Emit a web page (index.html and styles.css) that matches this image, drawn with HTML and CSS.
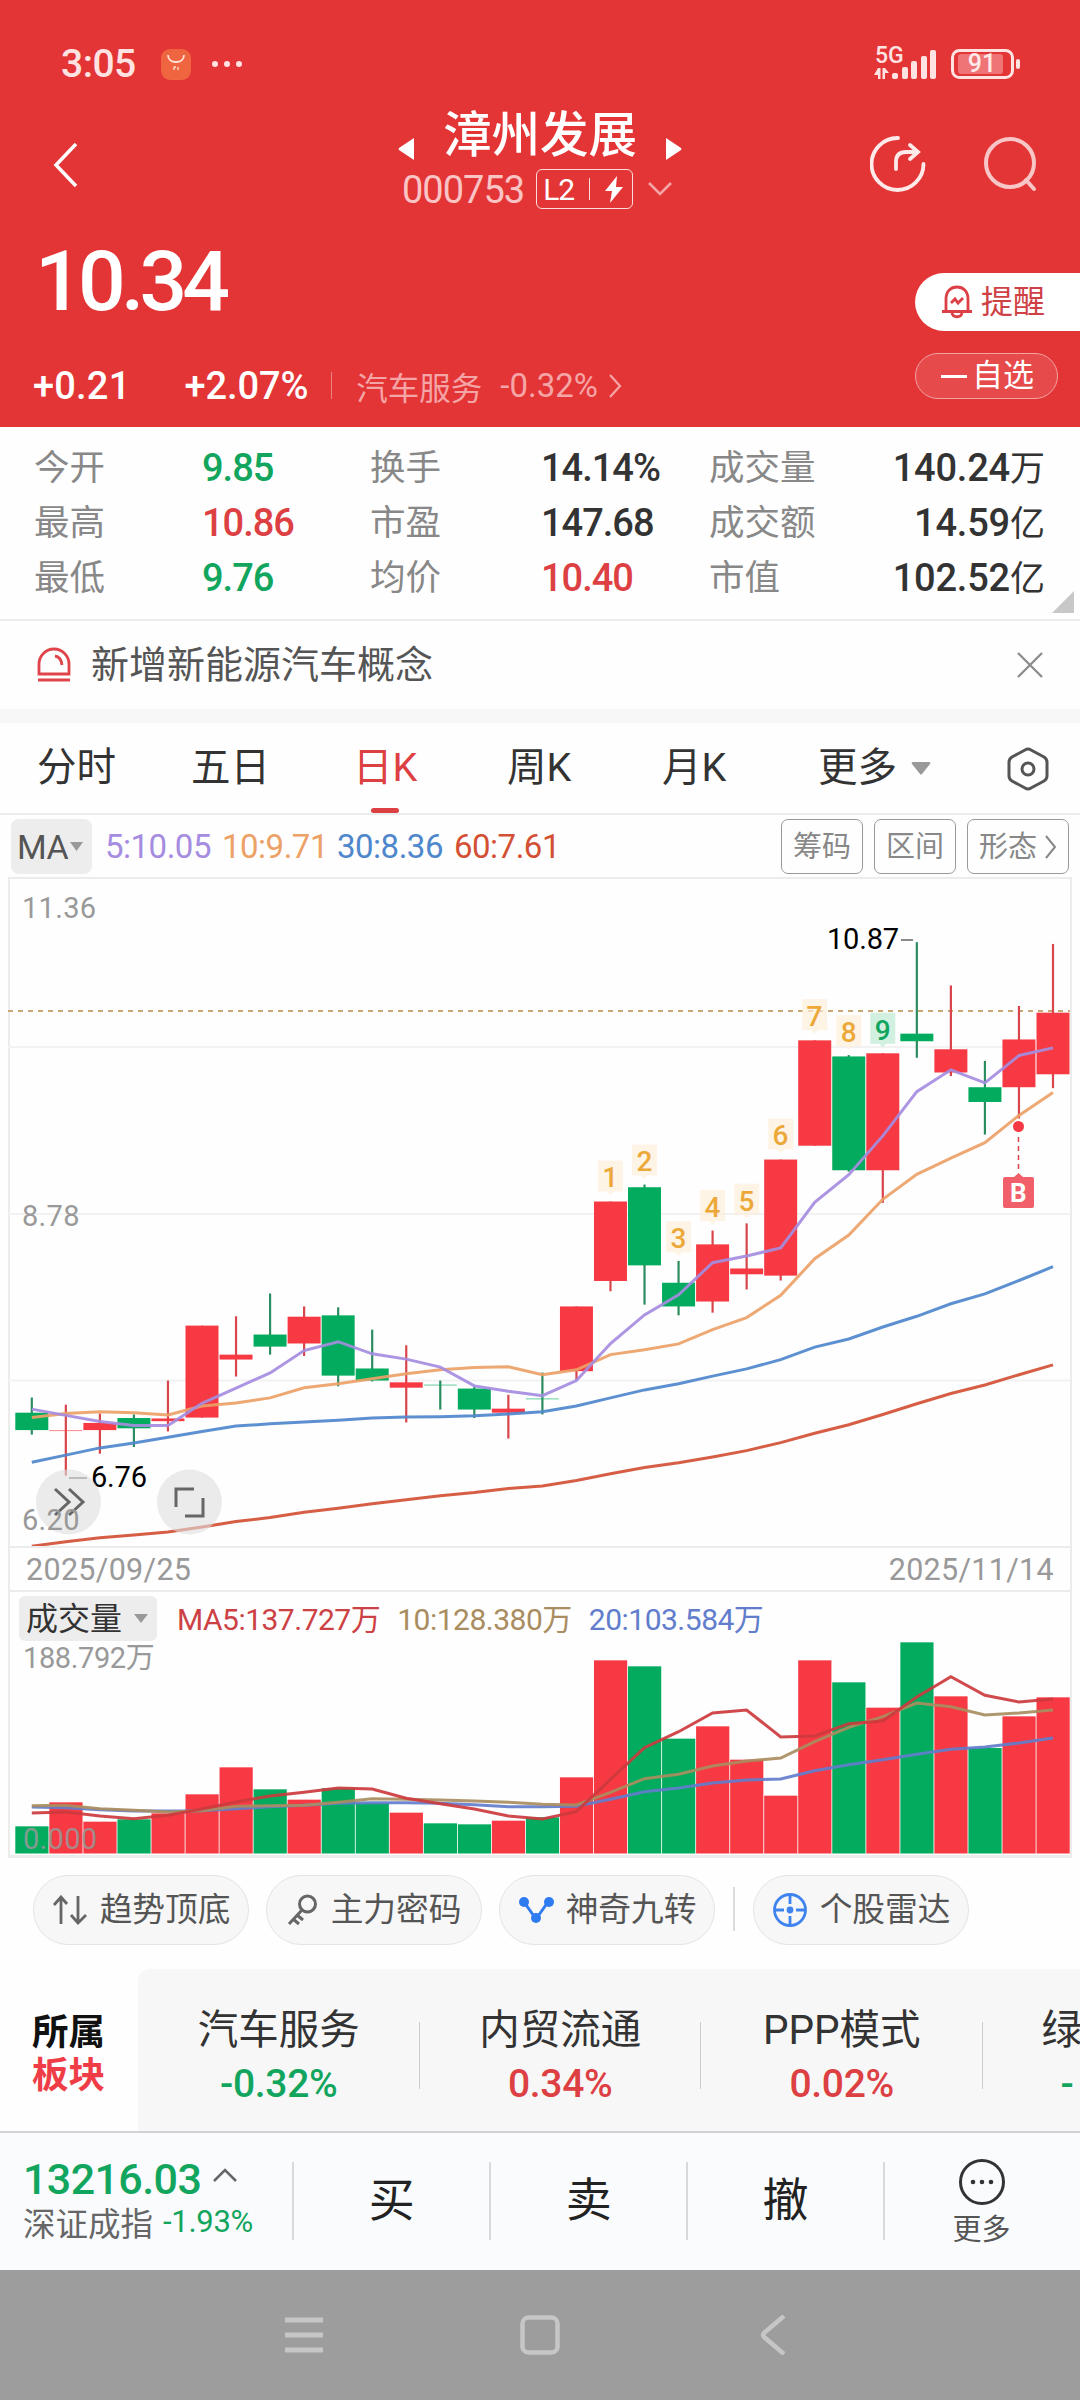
FILE: index.html
```html
<!DOCTYPE html>
<html lang="zh-CN">
<head>
  <meta charset="UTF-8" />
  <meta name="viewport" content="width=device-width, initial-scale=1.0" />
  <title>漳州发展 000753</title>
  <link rel="stylesheet" href="styles.css">
</head>
<body>
  <header>
    <div class="status">
      <span class="clock">3:05</span>
      <svg class="app-icon" width="30" height="31" viewBox="0 0 30 31"><rect width="30" height="31" rx="9" fill="#ee6540"/><path d="M7 6c0 4 3 7 8 7s8-3 8-7" fill="none" stroke="#fde3d8" stroke-width="1.8"/><path d="M13 18v3M17 18v3M13 18h2" stroke="#fde3d8" stroke-width="1.3" fill="none"/></svg>
      <svg width="32" height="8" viewBox="0 0 32 8" fill="#ffe3e3"><circle cx="4" cy="4" r="3"/><circle cx="16" cy="4" r="3"/><circle cx="28" cy="4" r="3"/></svg>
      <span class="grow"></span>
      <svg width="64" height="44" viewBox="0 -4 64 44" fill="#ffe3e3">
        <text x="1" y="17" class="net">5G</text>
        <path d="M4 22h2.5v11H4zl-4 7h4zM8.500 22h2.500v11h-2.500zM11 22l4 5h-4z"/>
        <rect x="18" y="27" width="6" height="6" rx="2"/><rect x="28" y="21" width="6" height="12" rx="2"/><rect x="37" y="15" width="6" height="18" rx="2"/><rect x="47" y="10" width="6" height="23" rx="2"/><rect x="56" y="4" width="6" height="29" rx="2"/>
      </svg>
      <svg class="battery" width="70" height="30" viewBox="0 0 70 30">
        <rect x="1.500" y="1.500" width="60" height="27" rx="7" fill="none" stroke="#ffe3e3" stroke-width="3"/>
        <rect x="7" y="5" width="45" height="20" rx="3" fill="#ee7476"/>
        <rect x="65" y="10" width="4" height="10" rx="2" fill="#ffe3e3"/>
        <text x="31" y="23" text-anchor="middle" class="bat">91</text>
      </svg>
    </div>

    <div class="titlebar">
      <svg class="back" width="26" height="46" viewBox="0 0 26 46"><path d="M23 2L3 23l20 21" fill="none" stroke="#fff" stroke-width="3.500"/></svg>
      <div class="stock">
        <div class="name">
          <svg width="17" height="24" viewBox="0 0 17 24"><path d="M16 1v22L1 13q-1-1 0-2z" fill="#fff"/></svg>
          <h1>漳州发展</h1>
          <svg width="17" height="24" viewBox="0 0 17 24"><path d="M1 1v22l15-10q1-1 0-2z" fill="#fff"/></svg>
        </div>
        <div class="code">
          <span>000753</span>
          <div class="level">L2<i></i><svg width="18" height="27" viewBox="0 0 18 27"><path d="M12 0L0 15h7L5 27l13-16h-7z" fill="#fff"/></svg></div>
          <svg width="24" height="14" viewBox="0 0 24 14"><path d="M1 1l11 11L23 1" fill="none" stroke="#f5a5a6" stroke-width="2.500"/></svg>
        </div>
      </div>
      <div class="tools">
        <svg width="56" height="58" viewBox="0 0 56 58" fill="none" stroke="#ffe9e9" stroke-width="3.800" stroke-linecap="round"><path d="M28 3A26 26 0 1 0 53.500 29"/><path d="M26 34v-7q0-10 10-10h11M40 10l8 7-8 7"/></svg>
        <svg width="54" height="58" viewBox="0 0 54 58" fill="none" stroke="#f8c6c7" stroke-width="4" stroke-linecap="round"><circle cx="27" cy="28" r="24"/><path d="M43 45l8 9"/></svg>
      </div>
    </div>

    <div class="quote">
      <div>
        <div class="price">10.34</div>
        <div class="change">
          <b>+0.21</b><b class="pct">+2.07%</b><i></i>
          <span class="sector">汽车服务</span><span class="sector-pct">-0.32%</span>
          <svg width="13" height="24" viewBox="0 0 13 24"><path d="M1 1l10 11L1 23" fill="none" stroke="#f5a5a6" stroke-width="2.200"/></svg>
        </div>
      </div>
      <div class="actions">
        <div class="remind">
          <svg width="32" height="34" viewBox="0 0 32 34" fill="none" stroke="#dc3f45" stroke-width="2.800"><path d="M5 26V14C5 6 10 2 16 2s11 4 11 12v12M1 26.500h30M11 28c1 5 9 5 10 0"/><path d="M10 18l4-4 3 4 5-5"/></svg>
          提醒
        </div>
        <div class="watch"><i></i>自选</div>
      </div>
    </div>
  </header>

  <section class="stats">
    <span>今开</span><b class="green">9.85</b><span>换手</span><b>14.14%</b><span>成交量</span><b class="right">140.24<em>万</em></b>
    <span>最高</span><b class="red">10.86</b><span>市盈</span><b>147.68</b><span>成交额</span><b class="right">14.59<em>亿</em></b>
    <span>最低</span><b class="green">9.76</b><span>均价</span><b class="red">10.40</b><span>市值</span><b class="right">102.52<em>亿</em></b>
    <i class="corner"></i>
  </section>

  <section class="notice">
    <svg width="34" height="36" viewBox="0 0 34 36" fill="none" stroke="#e0444b" stroke-width="2.800"><path d="M2 27V17a15 15 0 0 1 30 0v10zM1 33h32M18 9q6 1 7 9"/></svg>
    <span>新增新能源汽车概念</span>
    <svg width="26" height="26" viewBox="0 0 26 26"><path d="M1 1l24 24M25 1L1 25" stroke="#8c8c8c" stroke-width="2.300"/></svg>
  </section>

  <nav class="tabs">
    <span>分时</span><span>五日</span><span class="active">日K</span><span>周K</span><span>月K</span><span>更多<svg width="20" height="13" viewBox="0 0 20 13"><path d="M2 0h16q2 0 1 2l-8 10q-1 1-2 0L1 2q-1-2 1-2z" fill="#999"/></svg></span>
    <svg class="gear" width="42" height="44" viewBox="0 0 42 44" fill="none" stroke="#555" stroke-width="3"><path d="M18 3q3-2 6 0l13 7q3 2 3 5v14q0 3-3 5l-13 7q-3 2-6 0L5 34q-3-2-3-5V15q0-3 3-5z"/><circle cx="21" cy="22" r="6"/></svg>
  </nav>

  <section class="ma-bar">
    <div class="ma">MA<svg width="13" height="9" viewBox="0 0 13 9"><path d="M0 0h13L6.500 9z" fill="#999"/></svg></div>
    <span class="ma5">5:10.05</span><span class="ma10">10:9.71</span><span class="ma30">30:8.36</span><span class="ma60">60:7.61</span>
    <div class="btns"><div>筹码</div><div>区间</div><div>形态<svg width="13" height="24" viewBox="0 0 13 24"><path d="M2 1l9 11-9 11" fill="none" stroke="#888" stroke-width="2"/></svg></div></div>
  </section>

  <section class="charts">
    <svg id="kline" width="1062" height="667" viewBox="8 879 1062 667"></svg>
    <div class="dates"><span>2025/09/25</span><span>2025/11/14</span></div>
    <div class="vol-bar">
      <div class="vol">成交量<svg width="14" height="9" viewBox="0 0 14 9"><path d="M0 0h14L7 9z" fill="#999"/></svg></div>
      <span class="v5">MA5:137.727万</span><span class="v10">10:128.380万</span><span class="v20">20:103.584万</span>
    </div>
    <svg id="volume" width="1062" height="214" viewBox="8 1641 1062 214"></svg>
  </section>

  <section class="pills">
    <div><svg width="36" height="30" viewBox="0 0 36 30" fill="none" stroke="#666" stroke-width="2.800"><path d="M9 29V3M2 10l7-8 6 7M26 1v26M19 20l7 8 8-8"/></svg>趋势顶底</div>
    <div><svg width="32" height="32" viewBox="0 0 32 32" fill="none" stroke="#666" stroke-width="3"><circle cx="20.500" cy="10" r="8"/><path d="M15 16L2 30M6 25l6 5M10 21l6 5"/></svg>主力密码</div>
    <div><svg width="36" height="28" viewBox="0 0 36 28" fill="#2f7bf0"><path d="M6 6l12 17L30 6" fill="none" stroke="#2f7bf0" stroke-width="3"/><circle cx="6" cy="6" r="5"/><circle cx="18" cy="22" r="5"/><circle cx="31" cy="6" r="5"/></svg>神奇九转</div>
    <i></i>
    <div><svg width="36" height="36" viewBox="0 0 36 36" fill="none" stroke="#3e83ee" stroke-width="2.800"><circle cx="18" cy="18" r="15.500"/><path d="M18 2v10M18 24v10M2 18h10M24 18h10"/><circle cx="18" cy="18" r="2" fill="#3e83ee"/></svg>个股雷达</div>
  </section>

  <section class="blocks">
    <div class="belong">所属<b>板块</b></div>
    <div class="block-list">
      <div class="block">汽车服务<b class="green">-0.32%</b></div>
      <div class="block">内贸流通<b class="red">0.34%</b></div>
      <div class="block">PPP模式<b class="red">0.02%</b></div>
      <div class="block cut">绿<b class="green">-</b></div>
    </div>
  </section>

  <footer>
    <div class="index">
      <div class="index-val">13216.03<svg width="24" height="14" viewBox="0 0 24 14"><path d="M1 13L12 2l11 11" fill="none" stroke="#666" stroke-width="2.500"/></svg></div>
      <div class="index-name">深证成指<span>-1.93%</span></div>
    </div>
    <div class="trade">买</div>
    <div class="trade">卖</div>
    <div class="trade">撤</div>
    <div class="more">
      <svg width="48" height="48" viewBox="0 0 48 48" fill="#333"><circle cx="24" cy="24" r="21.500" fill="none" stroke="#333" stroke-width="3"/><circle cx="15" cy="24" r="2.300"/><circle cx="24" cy="24" r="2.300"/><circle cx="33" cy="24" r="2.300"/></svg>
      更多
    </div>
  </footer>

  <div class="sysnav">
    <svg width="38" height="40" viewBox="0 0 38 40" stroke="#c6c6c6" stroke-width="5"><path d="M0 5h38M0 20h38M0 35h38"/></svg>
    <svg width="40" height="40" viewBox="0 0 40 40" fill="none" stroke="#c6c6c6" stroke-width="4.500"><rect x="2.500" y="2.500" width="35" height="35" rx="6"/></svg>
    <svg width="26" height="40" viewBox="0 0 26 40" fill="none" stroke="#c6c6c6" stroke-width="4.500"><path d="M24 1L4 18q-2 2 0 4l20 17"/></svg>
  </div>

  <script src="chart.js"></script>
</body>
</html>
```
FILE: styles.css
```css
* { box-sizing: border-box; }
body { margin: 0; width: 1080px; font-family: Roboto, "Noto Sans CJK SC", sans-serif; background: #fefefe; color: #333; overflow-x: hidden; }
svg { display: block; flex: none; }
b { font-weight: 500; }
i, em { font-style: normal; }
.green { color: #12a55e; }
.red { color: #dd4043; }
.grow { flex: 1; }

/* header */
header { background: #e33536; height: 427px; color: #fff; }
.status { display: flex; align-items: center; height: 100px; padding: 28px 59px 0 61px; color: #ffe3e3; }
.clock { font-size: 39px; width: 100px; font-weight: 500; letter-spacing: -.5px; }
.app-icon { margin-right: 20px; }
.battery { margin-left: 13px; }
.net { font-size: 23px; font-weight: 500; }
.bat { font-size: 25px; font-weight: 500; fill: #ffe9e9; }
.titlebar { display: grid; grid-template-columns: 300px 480px 300px; height: 116px; }
.back { margin: 42px 0 0 53px; }
.name { display: flex; justify-content: center; align-items: center; height: 66px; gap: 28px; }
.name svg { margin-top: 32px; }
h1 { margin: 5px 0 0; font-size: 48.5px; line-height: 66px; font-weight: 500; }
.code { display: flex; align-items: center; height: 46px; padding-left: 102px; font-size: 38px; color: #fac3c4; letter-spacing: -1px; }
.code > span { padding-top: 2px; }
.level { display: flex; align-items: center; justify-content: space-between; width: 97px; height: 40px; margin: 0 15px 0 12px; padding: 0 9px 0 6px; border: 1.500px solid #fbdcdc; border-radius: 6px; color: #fff; font-size: 30px; }
.level i { width: 1px; height: 22px; background: #fbdcdc; }
.tools { display: flex; gap: 57px; padding: 35px 0 0 90px; }
.quote { display: flex; justify-content: space-between; }
.price { height: 130px; padding-left: 35px; font-size: 84px; line-height: 132px; font-weight: 500; letter-spacing: -4.800px; }
.change { display: flex; align-items: center; height: 78px; padding-left: 33px; padding-top: 1px; font-size: 38px; letter-spacing: .2px; }
.change .pct { margin-left: 54px; letter-spacing: -.1px; }
.change i { width: 1px; height: 27px; margin: 0 24px 0 23px; background: #ef8485; }
.sector { font-size: 31.5px; letter-spacing: 0; color: #f5a5a6; }
.sector-pct { margin: 0 11px 0 18px; font-size: 33px; color: #f5a5a6; letter-spacing: 0; }
.actions { display: flex; flex-direction: column; gap: 22px; width: 165px; padding-top: 57px; }
.remind { display: flex; align-items: center; gap: 8px; height: 58px; padding-left: 26px; border-radius: 29px 0 0 29px; background: #fff; color: #cf4145; font-size: 32px; line-height: 58px; }
.watch { display: flex; align-items: center; gap: 5px; width: 143px; height: 46px; padding-left: 25px; border: 1.500px solid #f3a3a4; border-radius: 23px; background: #e64a4b; font-size: 31px; line-height: 40px; }
.watch i { width: 26px; height: 3px; background: #fff; }

/* quote table */
.stats { position: relative; display: grid; grid-template-columns: 168px 168px 171px 168px 150px 186px; grid-auto-rows: 55px; height: 194px; padding: 14px 34px 0; border-bottom: 2px solid #ececec; line-height: 55px; }
.stats span { font-size: 35.5px; color: #888; }
.stats b { font-size: 38px; letter-spacing: -1px; }
.stats em { font-size: 35px; font-weight: 400; letter-spacing: 0; }
.stats .right { text-align: right; letter-spacing: -.2px; }
.corner { position: absolute; right: 6px; bottom: 6px; border-left: 22px solid transparent; border-bottom: 22px solid #c8c8c8; }

.notice { display: flex; align-items: center; height: 102px; padding: 0 37px; border-bottom: 14px solid #f7f7f7; font-size: 38px; color: #555; }
.notice span { flex: 1; margin-left: 20px; line-height: 84px; }

.tabs { display: flex; position: relative; height: 92px; padding-left: 37px; border-bottom: 2px solid #ececec; font-size: 39.500px; line-height: 92px; color: #333; }
.tabs span { display: flex; align-items: center; width: 157px; height: 90px; }
.tabs span:nth-child(1) { width: 154px; }
.tabs span:nth-child(2) { width: 162px; }
.tabs span:nth-child(3) { width: 154px; }
.tabs span:nth-child(4) { width: 155px; }
.tabs span:nth-child(5) { width: 156px; }
.tabs span:nth-child(6) { width: 189px; }
.tabs span svg { margin-left: 14px; }
.tabs .active { color: #dd4043; position: relative; }
.active::after { content: ""; position: absolute; left: 18px; bottom: 0; width: 28px; height: 5px; border-radius: 3px; background: #dd4043; }
.gear { margin-top: 24px; }

.ma-bar { display: flex; align-items: center; height: 63px; padding: 0 11px; font-size: 33px; letter-spacing: -.5px; }
.ma { display: flex; align-items: center; gap: 2px; width: 81px; height: 55px; margin-right: 13px; padding-left: 6px; border-radius: 8px; background: #ededed; color: #555; font-size: 34px; }
.ma-bar > span { width: 117px; }
.ma5 { color: #a58ce0; }
.ma-bar .ma10 { color: #eca167; width: 115px; }
.ma30 { color: #4f87cc; }
.ma60 { color: #d35035; }
.btns { display: flex; gap: 11px; margin-left: auto; letter-spacing: 0; }
.btns div { display: flex; align-items: center; gap: 7px; height: 55px; padding: 0 11px; border: 1.500px solid #999; border-radius: 7px; font-size: 29px; line-height: 48px; color: #888; }

/* charts */
.charts { width: 1064px; margin: -1px 0 0 8px; border: 2px solid #ececec; border-bottom-width: 3px; }
.charts > svg { margin-left: -2px; }
.charts text { font-size: 29px; fill: #999; letter-spacing: .3px; }
.charts .tag { font-size: 28px; font-weight: 500; fill: #eda83a; text-anchor: middle; }
.charts .tag9 { fill: #12a55e; }
.charts .tagb { font-size: 26px; font-weight: 700; fill: #fff; text-anchor: middle; }
.charts .mark { fill: #000; letter-spacing: -.2px; }
.dates { display: flex; justify-content: space-between; align-items: center; height: 46px; padding: 0 16px; border-top: 2px solid #ececec; border-bottom: 2px solid #ececec; font-size: 30.500px; letter-spacing: .3px; color: #999; }
.vol-bar { display: flex; align-items: center; height: 49px; padding-left: 9px; font-size: 30px; letter-spacing: -.5px; }
.vol { display: flex; align-items: center; gap: 12px; width: 138px; height: 45px; margin: 4px 20px 0 0; padding-left: 7px; border-radius: 6px; background: #ededed; font-size: 32px; line-height: 40px; letter-spacing: 0; }
.vol-bar span { margin-right: 17px; }
.v5 { color: #cc4144; }
.v10 { color: #a98d60; }
.v20 { color: #627dcc; }

.pills { display: flex; align-items: flex-start; gap: 17px; height: 111px; padding: 17px 33px 0; }
.pills div { display: flex; align-items: center; justify-content: center; gap: 12px; width: 216px; height: 70px; border: 1.500px solid #e4e4e4; border-radius: 35px; background: #f7f7f7; font-size: 32.700px; line-height: 64px; color: #555; }
.pills i { width: 2px; height: 44px; margin: 12px 1px 0; background: #ddd; }

.blocks { display: flex; height: 162px; overflow: hidden; }
.belong { width: 138px; padding: 42px 0 0 32px; font-size: 36.5px; line-height: 43px; font-weight: 700; color: #111; }
.belong b { display: block; font-weight: 700; color: #ee3d46; }
.block-list { display: flex; flex: 1; border-radius: 12px 0 0; background: #f7f7f7; overflow: hidden; }
.block { position: relative; flex: none; width: 281.500px; padding-top: 32px; text-align: center; font-size: 40.5px; line-height: 58px; }
.block b { display: block; font-size: 39px; line-height: 50px; letter-spacing: -.3px; }
.block:not(.cut)::after { content: ""; position: absolute; right: 0; top: 53px; width: 1px; height: 67px; background: #ccc; }
.cut { width: 97px; text-align: left; padding-left: 59px; }
.cut b { padding-left: 19px; }

footer { display: flex; height: 139px; border-top: 2px solid #d2d2d4; background: #fafbfd; }
.index { width: 293px; padding: 21px 0 0 23px; }
.index-val { display: flex; align-items: center; gap: 12px; height: 50px; font-size: 43px; font-weight: 500; letter-spacing: -.6px; color: #12a55e; }
.index-val svg { margin-top: -8px; }
.index-name { display: flex; align-items: center; gap: 10px; height: 34px; font-size: 32.500px; color: #666; }
.index-name span { font-size: 31px; color: #12a55e; letter-spacing: -.3px; }
.trade, .more { position: relative; width: 197.500px; text-align: center; }
.trade { font-size: 46px; line-height: 134px; color: #222; padding-left: 2px; }
.trade::before, .more::before { content: ""; position: absolute; left: 0; top: 29px; width: 2px; height: 78px; background: #d8d9db; }
.more { padding-top: 25px; font-size: 29px; line-height: 48px; color: #555; }
.more svg { margin: 0 auto; }

.sysnav { display: grid; grid-template-columns: 235px 240px 26px; height: 130px; padding: 45px 0 0 285px; background: #9d9d9d; }
```
FILE: chart.js
```js
const RED = '#f63942', GREEN = '#02ab5e';
const x = i => 31.8 + i * 34.04;
const py = v => 860 + v / 2.24;
const vy = v => 1540 + v / 3;

// type, high, body top, body bottom, low
const candles = [
  ['g', 1204, 1238, 1277, 1287], ['r', 1220, 1277, 1279, 1379], ['r', 1240, 1261, 1277, 1330],
  ['g', 1242, 1250, 1273, 1315], ['r', 1166, 1251, 1257, 1280], ['r', 1043, 1043, 1249, 1249],
  ['r', 1022, 1108, 1119, 1157], ['g', 971, 1063, 1090, 1108], ['r', 1000, 1023, 1083, 1111],
  ['g', 1002, 1020, 1155, 1179], ['g', 1052, 1139, 1166, 1168], ['r', 1087, 1170, 1182, 1260],
  ['g', 1166, 1175, 1177, 1231], ['g', 1180, 1184, 1231, 1250], ['r', 1198, 1229, 1238, 1296],
  ['g', 1148, 1206, 1208, 1242], ['r', 1000, 1000, 1145, 1165], ['r', 765, 765, 943, 966],
  ['g', 727, 733, 908, 996], ['g', 898, 947, 1000, 1020], ['r', 830, 861, 989, 1014],
  ['r', 814, 915, 928, 962], ['r', 671, 671, 931, 942], ['r', 404, 404, 640, 640],
  ['g', 437, 440, 695, 698], ['r', 433, 433, 695, 768], ['g', 184, 389, 406, 443],
  ['r', 281, 424, 476, 484], ['g', 450, 509, 542, 615], ['r', 327, 402, 509, 579],
  ['r', 188, 342, 480, 511]
];
const volumes = [859, 787, 845, 838, 820, 763, 682, 748, 779, 745, 789, 818, 850, 853, 842, 832, 712, 361, 379, 596, 559, 659, 767, 361, 427, 503, 307, 469, 624, 529, 472];

const priceLines = [
  ['#d35035', [1537, 1527, 1518, 1512, 1505, 1494, 1482, 1473, 1461, 1452, 1442, 1433, 1424, 1417, 1408, 1402, 1390, 1375, 1361, 1350, 1337, 1323, 1305, 1284, 1265, 1242, 1218, 1195, 1176, 1153, 1131]],
  ['#4f87cc', [1349, 1333, 1317, 1306, 1293, 1280, 1268, 1263, 1259, 1255, 1250, 1248, 1247, 1245, 1241, 1236, 1223, 1205, 1187, 1173, 1156, 1140, 1119, 1091, 1073, 1046, 1022, 994, 972, 942, 911]],
  ['#eca167', [1249, 1240, 1236, 1238, 1243, 1223, 1216, 1205, 1182, 1173, 1162, 1151, 1142, 1137, 1135, 1153, 1142, 1108, 1097, 1084, 1052, 1025, 975, 893, 840, 760, 704, 668, 633, 572, 521]],
  ['#a58ce0', [1230, 1244, 1258, 1267, 1267, 1217, 1183, 1149, 1099, 1079, 1106, 1118, 1136, 1178, 1190, 1200, 1166, 1083, 1019, 974, 902, 887, 869, 767, 705, 618, 519, 470, 499, 438, 421]]
];
const volumeLines = [
  ['#627dcc', [801, 803, 809, 813, 813, 812, 806, 800, 796, 790, 788, 788, 790, 794, 800, 800, 799, 778, 755, 744, 729, 720, 717, 692, 674, 659, 643, 628, 621, 609, 594]],
  ['#a98d60', [797, 796, 806, 811, 816, 812, 799, 797, 796, 787, 776, 778, 780, 783, 787, 793, 795, 757, 716, 703, 678, 663, 654, 605, 562, 530, 489, 500, 525, 519, 510]],
  ['#cc3b3e', [819, 816, 828, 836, 826, 807, 786, 768, 757, 744, 747, 775, 791, 807, 828, 837, 815, 718, 623, 575, 519, 510, 591, 588, 551, 543, 471, 410, 466, 486, 477]]
];
// candle index, box top
const tags = [[17, 673], [18, 637], [19, 809], [20, 739], [21, 725], [22, 579], [23, 312], [24, 348], [25, 342]];

function line(color, values, y) {
  const pts = values.map((v, i) => `${x(i).toFixed(1)},${y(v).toFixed(1)}`).join(' ');
  return `<polyline points="${pts}" fill="none" stroke="${color}" stroke-width="3" opacity=".92"/>`;
}

function drawKline() {
  let s = '';
  for (const y of [1047, 1214, 1380.5]) {
    s += `<path d="M8 ${y}H1070" stroke="#f2f2f2" stroke-width="2"/>`;
  }
  s += '<path d="M8 1011H1070" stroke="#c9a878" stroke-width="1.8" stroke-dasharray="5 5"/>';
  candles.forEach(([type, high, top, bottom, low], i) => {
    const c = type === 'r' ? RED : GREEN;
    const h = Math.max((bottom - top) / 2.24, 1);
    s += `<path d="M${x(i)} ${py(high)}V${py(low)}" stroke="${type === 'r' ? '#d8454b' : '#2c8c60'}" stroke-width="2.2"/>`;
    s += `<rect x="${x(i) - 16.5}" y="${py(top)}" width="33" height="${h}" fill="${c}"${h < 2 ? ' opacity=".6"' : ''}/>`;
  });
  for (const [color, values] of priceLines) s += line(color, values, py);
  tags.forEach(([i, top], n) => {
    const cx = x(i), y = py(top), nine = n === 8;
    s += `<path d="M${cx - 12.5} ${y}h25v31h-9l-3.500 3.500l-3.500-3.500h-9z" fill="${nine ? '#b9e8cf' : '#fdeed8'}" opacity=".65"/>`;
    s += `<text class="tag${nine ? ' tag9' : ''}" x="${cx}" y="${y + 27}">${n + 1}</text>`;
  });
  // buy point
  s += `<circle cx="1018.5" cy="1126.500" r="5.500" fill="${RED}"/><path d="M1018.500 1137v33" stroke="#d8454b" stroke-width="1.500" stroke-dasharray="5 4"/>`;
  s += '<path d="M1005 1177h9l4.500-4 4.500 4h9q2 0 2 2v27q0 2-2 2h-27q-2 0-2-2v-27q0-2 2-2z" fill="#f1606a"/><text class="tagb" x="1018.500" y="1202">B</text>';
  s += '<text class="mark" x="827" y="949">10.87</text><path d="M901 940h12M69 1478h18" stroke="#666" stroke-width="1.500"/><text class="mark" x="91" y="1487">6.76</text>';
  // floating controls
  s += '<g fill="none" stroke="#666" stroke-width="3"><circle cx="68.500" cy="1502" r="32.500" fill="#ddd" fill-opacity=".6" stroke="none"/><path d="M55 1489l14 13-14 13M69 1489l14 13-14 13"/>';
  s += '<circle cx="189.500" cy="1502" r="32.500" fill="#ddd" fill-opacity=".6" stroke="none"/><path d="M194 1489h-18v18M185 1516h18v-18"/></g>';
  s += '<text x="22" y="918">11.36</text><text x="22" y="1226">8.78</text><text x="22" y="1530">6.20</text>';
  document.getElementById('kline').innerHTML = s;
}

function drawVolume() {
  let s = '<text x="23" y="1668" textLength="132">188.792万</text>';
  volumes.forEach((v, i) => {
    s += `<rect x="${x(i) - 16.5}" y="${vy(v)}" width="33.200" height="${1853.5 - vy(v)}" fill="${candles[i][0] === 'r' ? RED : GREEN}"/>`;
  });
  for (const [color, values] of volumeLines) s += line(color, values, vy);
  s += '<text x="23" y="1849" opacity=".85">0.000</text>';
  document.getElementById('volume').innerHTML = s;
}

drawKline();
drawVolume();
```
